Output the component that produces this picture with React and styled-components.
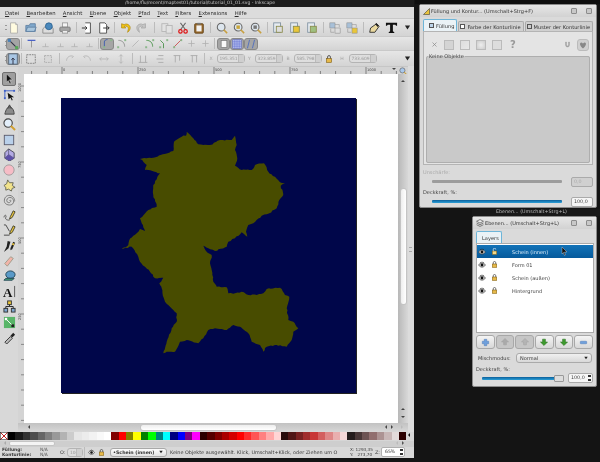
import React from "react";
import styled, { createGlobalStyle } from "styled-components";

const Global = createGlobalStyle`
  html, body { margin: 0; padding: 0; background: #141414; }
  body { font-family: "DejaVu Sans", sans-serif; font-size: 5.2px; color: #3a3a3a; }
  * { box-sizing: border-box; }
`;

const Desktop = styled.div`
  position: relative;
  width: 600px;
  height: 462px;
  overflow: hidden;
  background: #141414;
  filter: blur(0.35px);
`;

const MainWindow = styled.div`
  position: absolute;
  left: 0;
  top: 0;
  width: 414px;
  height: 458px;
  display: flex;
  flex-direction: column;
  background: #d6d6d6;
  border-bottom-right-radius: 3px;
`;

const TitleBar = styled.div`
  height: 7px;
  flex: none;
  background: #1c1c1c;
  color: #c4c4c4;
  font-size: 4.55px;
  line-height: 6px;
  text-align: center;
  padding-right: 14px;
  white-space: nowrap;
`;

const MenuBar = styled.div`
  height: 11px;
  flex: none;
  display: flex;
  align-items: center;
  gap: 7.3px;
  padding-left: 5px;
  background: #dcdcdc;
  font-size: 5.3px;
  color: #2c2c2c;
  u { text-underline-offset: 1px; }
`;

const Toolbar = styled.div`
  height: ${(p) => p.$h}px;
  flex: none;
  display: flex;
  align-items: center;
  padding-left: 8.5px;
  border-top: 1px solid #c9c9c9;
  background: linear-gradient(#e6e6e6, #d4d4d4);
  position: relative;
`;

const Grip = styled.span`
  width: 2px;
  height: 5px;
  margin-right: -1px;
  margin-left: -4px;
  border-top: 1px solid #999;
  border-bottom: 1px solid #999;
  flex: none;
`;

const Slot = styled.span`
  width: ${(p) => p.$w}px;
  height: ${(p) => (p.$w > 15 ? 14 : 12)}px;
  flex: none;
  display: inline-flex;
  align-items: center;
  justify-content: center;
  border-radius: 3px;
  ${(p) => p.$on && "background: #a5a5a5; border: 1px solid #888;"}
`;

const Sep = styled.span`
  width: 1px;
  height: 11px;
  flex: none;
  margin: 0 ${(p) => p.$m}px;
  background: #bcbcbc;
`;

const Fill = styled.span`
  flex: 1;
`;

const FieldLabel = styled.span`
  color: #a4a4a4;
  font-size: 4.6px;
  width: ${(p) => p.$w}px;
  text-align: center;
  flex: none;
`;

const SmallField = styled.span`
  width: ${(p) => p.$w}px;
  height: 9px;
  flex: none;
  border: 1px solid #b4b4b4;
  border-radius: 3px;
  font-size: 4.4px;
  line-height: 7px;
  padding-left: 2px;
  color: #9a9a9a;
  background: #dedede;
  position: relative;
  &::after {
    content: "";
    position: absolute;
    right: 0;
    top: 0;
    bottom: 0;
    width: 5px;
    border-left: 1px solid #bbb;
    background: #cfcfcf;
  }
`;

const Workspace = styled.div`
  flex: 1;
  min-height: 0;
  display: grid;
  grid-template-columns: 18px 6px 1fr 10px 6px;
  grid-template-rows: 8px 1fr 9px;
  background: #d6d6d6;
`;

const Toolbox = styled.div`
  grid-row: 1 / 4;
  display: flex;
  flex-direction: column;
  align-items: center;
  padding-top: 5px;
  border-top: 1px solid #c6c6c6;
  background: #d8d8d8;
  gap: 1.2px;
`;

const ToolSlot = styled.span`
  width: 14px;
  height: 14px;
  display: flex;
  align-items: center;
  justify-content: center;
  border-radius: 2px;
  ${(p) => p.$on && "background: #9e9e9e; border: 1px solid #707070;"}
`;

const HRuler = styled.div`
  grid-column: 2 / 5;
  background: #d4d4d4;
  border-top: 1px solid #c6c6c6;
  position: relative;
  svg { display: block; }
`;

const CornerZoom = styled.span`
  position: absolute;
  left: 381px;
  top: 0;
`;

const VRuler = styled.div`
  background: #d4d4d4;
  svg { display: block; }
`;

const Canvas = styled.div`
  background: #fff;
  padding: 24px 0 0 37px;
  overflow: hidden;
`;

const Art = styled.svg`
  display: block;
  width: 295px;
  height: 295px;
  box-shadow: 1px 1px 0 #222;
`;

const VScroll = styled.div`
  background: linear-gradient(90deg, #b8b8b8, #d8d8d8);
  position: relative;
`;

const VThumb = styled.div`
  position: absolute;
  left: 2px;
  top: 114px;
  width: 7px;
  height: 117px;
  background: linear-gradient(90deg, #eee, #fff);
  border: 1px solid #c4c4c4;
  border-radius: 3px;
`;

const Pane = styled.div`
  grid-row: 1 / 4;
  grid-column: 5;
  background: #dcdcdc;
  position: relative;
  &::after {
    content: "";
    position: absolute;
    left: 1px;
    top: 181px;
    width: 3px;
    height: 3px;
    border-top: 1px solid #aaa;
    border-bottom: 1px solid #aaa;
  }
`;

const Arrow = styled.span`
  position: absolute;
  left: ${(p) => p.$x}px;
  top: ${(p) => p.$y}px;
  width: 0;
  height: 0;
  border: 2.5px solid transparent;
  ${(p) => `border-${p.$side}-color: ${p.$c || "#444"};`}
`;

const HScroll = styled.div`
  grid-column: 2 / 5;
  background: linear-gradient(#c2c2c2, #d8d8d8);
  position: relative;
`;

const HThumb = styled.div`
  position: absolute;
  left: 122px;
  top: 1px;
  width: 137px;
  height: 7px;
  background: linear-gradient(#eee, #fff);
  border: 1px solid #c4c4c4;
  border-radius: 3px;
`;

const Palette = styled.div`
  height: 9px;
  flex: none;
  display: flex;
  padding-right: 8px;
  position: relative;
  background: #d6d6d6;
`;

const NoColor = styled.svg`
  width: 8px;
  height: 8px;
  flex: none;
  background: #fff;
  display: block;
`;

const Swatch = styled.span`
  flex: 1;
  height: 8px;
  background: ${(p) => p.$c};
`;

const PaletteBar = styled.div`
  height: 6px;
  flex: none;
  padding-left: 9px;
  position: relative;
  background: #cecece;
`;

const PaletteThumb = styled.div`
  width: 46px;
  height: 5px;
  background: #f4f4f4;
  border: 1px solid #c4c4c4;
  border-radius: 2px;
`;

const StatusBar = styled.div`
  height: 11px;
  flex: none;
  display: flex;
  align-items: center;
  font-size: 4.9px;
  white-space: nowrap;
  background: #d8d8d8;
  padding-bottom: 1px;
`;

const StyleLabels = styled.div`
  width: 40px;
  flex: none;
  line-height: 5px;
  padding-left: 2px;
  font-weight: bold;
  font-size: 4.4px;
`;

const StyleValues = styled.div`
  width: 20px;
  flex: none;
  line-height: 5px;
  color: #555;
  font-size: 4.4px;
`;

const OpacityLabel = styled.span`
  flex: none;
  width: 7px;
`;

const Combo = styled.span`
  width: 57px;
  height: 9px;
  flex: none;
  margin: 0 3px 0 4px;
  display: flex;
  align-items: center;
  justify-content: space-between;
  padding: 0 2px;
  background: linear-gradient(#fbfbfb, #e2e2e2);
  border: 1px solid #a8a8a8;
  border-radius: 3px;
  font-size: 4.7px;
  font-weight: bold;
  color: #333;
`;

const Message = styled.span`
  width: 178px;
  flex: none;
  overflow: hidden;
`;

const Coords = styled.div`
  flex: none;
  width: 25px;
  margin-left: 2px;
  font-size: 4.2px;
  line-height: 5px;
  white-space: pre;
`;

const ZoomLabel = styled.span`
  flex: none;
  width: 6px;
`;

const ZoomBox = styled.span`
  width: 24px;
  height: 10px;
  flex: none;
  background: #fff;
  border: 1px solid #b0b0b0;
  border-radius: 2px;
  font-size: 4.6px;
  line-height: 8px;
  padding-left: 3px;
  position: relative;
`;

const SpinMark = styled.span`
  position: absolute;
  right: 1px;
  top: 1px;
  width: 3px;
  height: 6px;
  border-top: 2px solid #333;
  border-bottom: 2px solid #333;
`;

const ToolWindow = styled.div`
  position: absolute;
  left: ${(p) => p.$x}px;
  top: ${(p) => p.$y}px;
  width: ${(p) => p.$w}px;
  height: ${(p) => p.$h}px;
  display: flex;
  flex-direction: column;
  background: #dadada;
  border: 1px solid #8a8a8a;
  border-radius: 2px;
  padding: 0 3px;
`;

const DialogHead = styled.div`
  height: 12px;
  flex: none;
  display: flex;
  align-items: center;
  gap: 1px;
  margin: 0 -3px;
  padding: 0 4px 0 3px;
  background: linear-gradient(#e6e6e6, #d2d2d2);
  font-size: 5px;
  color: #333;
  white-space: nowrap;
`;

const HeadBtn = styled.span`
  width: 6px;
  height: 6px;
  margin-left: 8px;
  flex: none;
  border: 1px solid #8c8c8c;
  border-radius: 1px;
  background: #c8c8c8;
`;

const Tabs = styled.div`
  display: flex;
  align-items: flex-end;
  margin-top: 2px;
  height: 12px;
  flex: none;
  gap: 1px;
`;

const Tab = styled.span`
  height: ${(p) => (p.$on ? 12 : 10)}px;
  padding: 0 2px 0 ${(p) => (p.$on ? 5 : 1)}px;
  display: flex;
  align-items: center;
  gap: 2px;
  font-size: 5.1px;
  white-space: nowrap;
  color: #333;
  background: ${(p) => (p.$on ? "#eaf2f6" : "#d0d0d0")};
  border: 1px solid ${(p) => (p.$on ? "#6db5d8" : "#aaa")};
  border-bottom: none;
  border-radius: 2px 2px 0 0;
`;

const TabIcon = styled.span`
  width: 5px;
  height: 5px;
  flex: none;
  border: 1px solid #555;
  background: ${(p) => p.$c || "#fff"};
`;

const FillPanel = styled.div`
  height: 134px;
  flex: none;
  display: flex;
  flex-direction: column;
  padding: 5px 2px 1px;
  background: #e4e4e4;
  border: 1px solid #b4b4b4;
`;

const PaintRow = styled.div`
  display: flex;
  align-items: center;
  height: 15px;
  flex: none;
  padding: 0 1px 0 5px;
  gap: 6px;
`;

const PaintBtn = styled.span`
  width: 10px;
  height: 10px;
  flex: none;
  border: 1px solid #bbb;
  background: ${(p) => p.$bg || "#d4d4d4"};
`;

const Unknown = styled.span`
  font-weight: bold;
  font-size: 10px;
  color: #999;
  line-height: 10px;
  width: 10px;
  text-align: center;
`;

const RuleBtn = styled.span`
  width: 12px;
  height: 12px;
  flex: none;
  display: flex;
  align-items: center;
  justify-content: center;
  background: #d0d0d0;
  border: 1px solid #bbb;
  border-radius: 3px;
`;

const EmptyFrame = styled.fieldset`
  flex: 1;
  margin: 2px 0 0;
  padding: 0;
  background: #c9c9c9;
  border: 1px solid #aeaeae;
  border-radius: 2px;
  legend {
    margin-left: 1px;
    padding: 0 1px;
    font-size: 5px;
    line-height: 4px;
    color: #444;
  }
`;

const CapLabel = styled.div`
  font-size: 5px;
  height: 8px;
  flex: none;
  line-height: 8px;
  margin-top: ${(p) => p.$mt || 0}px;
  color: ${(p) => p.$c || "#444"};
`;

const SliderRow = styled.div`
  display: flex;
  align-items: center;
  flex: none;
  padding-left: ${(p) => p.$pl}px;
  gap: ${(p) => p.$gap}px;
  height: ${(p) => p.$h}px;
`;

const Track = styled.span`
  flex: 1;
  height: 3px;
  border-radius: 1px;
  position: relative;
  background: ${(p) => (p.$on ? "linear-gradient(#0b5e9a, #2ba0d8)" : "#9c9c9c")};
`;

const Knob = styled.span`
  position: absolute;
  right: -3px;
  top: -2px;
  width: 10px;
  height: 7px;
  background: #ddd;
  border: 1px solid #999;
  border-radius: 1px;
`;

const NumBox = styled.span`
  width: ${(p) => p.$w}px;
  height: 10px;
  flex: none;
  font-size: 4.8px;
  line-height: 8px;
  padding-left: 2px;
  border: 1px solid #aaa;
  border-radius: 2px;
  background: ${(p) => (p.$dim ? "#d0d0d0" : "#f6f6f6")};
  color: ${(p) => (p.$dim ? "#aaa" : "#444")};
  position: relative;
`;

const LayerFrame = styled.div`
  height: 90px;
  flex: none;
  background: #fff;
  border: 1px solid #aaa;
  padding-top: 1px;
  margin-right: -1px;
`;

const LayerRow = styled.div`
  height: 13px;
  display: grid;
  grid-template-columns: 12px 13px 1fr;
  align-items: center;
  padding-left: 1px;
  column-gap: 1px;
  font-size: 5px;
  color: ${(p) => (p.$on ? "#dfeefa" : "#444")};
  background: ${(p) => (p.$on ? "linear-gradient(#1273b8, #065a9c)" : "#fff")};
  position: relative;
  span { padding-left: 7px; }
`;

const Pointer = styled.svg`
  position: absolute;
  left: 84px;
  top: 2px;
  width: 8px;
  height: 9px;
`;

const LayerButtons = styled.div`
  display: flex;
  gap: 1px;
  margin-top: 2px;
  height: 14px;
  flex: none;
`;

const LayerBtn = styled.span`
  flex: 1;
  display: flex;
  align-items: center;
  justify-content: center;
  border: 1px solid #a8a8a8;
  border-radius: 3px;
  background: ${(p) => (p.$dim ? "#c6c6c6" : "linear-gradient(#f4f4f4, #d8d8d8)")};
`;

const BlendRow = styled.div`
  display: flex;
  align-items: center;
  justify-content: space-between;
  margin-top: 4px;
  height: 10px;
  flex: none;
  font-size: 5px;
  padding-left: 2px;
`;

const BlendCombo = styled.span`
  width: 76px;
  height: 10px;
  margin-right: 1px;
  padding: 0 2px 0 3px;
  display: flex;
  align-items: center;
  justify-content: space-between;
  border: 1px solid #aaa;
  border-radius: 3px;
  background: linear-gradient(#f0f0f0, #d8d8d8);
`;

const FloatTitle = styled.div`
  position: absolute;
  left: 472px;
  top: 209px;
  width: 128px;
  height: 7px;
  background: #181818;
  color: #b8b8b8;
  font-size: 4.8px;
  line-height: 5px;
  padding-left: 24px;
  white-space: nowrap;
`;

const TopBlack = styled.div`
  position: absolute;
  left: 415px;
  top: 0;
  width: 185px;
  height: 4px;
  background: #0e0e0e;
`;

const I = ({ s = 12, children, vb = "0 0 14 14" }) => (
  <svg width={s} height={s} viewBox={vb} style={{ display: "block" }}>
    {children}
  </svg>
);

const Dim = ({ d, s, f = "#c6c6c6", st = "#aaa" }) => (
  <I s={s}>
    <path d={d} fill={f} stroke={st} strokeWidth="1" strokeLinejoin="round" />
  </I>
);

const New = () => (<I><path d="M3 1h6l2 2v10H3z" fill="#fffbe0" stroke="#aaa" /><path d="M9 1v2h2" fill="#eee" stroke="#aaa" /></I>);
const Open = () => (<I><path d="M1 4h4l1-2h6v9H1z" fill="#7fa8cc" stroke="#5f80a2" /><path d="M1 11l2-5h10l-2 5z" fill="#a8c6de" stroke="#5f80a2" /></I>);
const Save = () => (<I><path d="M1 13V8l2-2h9l1 2v5z" fill="#ddd" stroke="#888" /><circle cx="8" cy="5" r="4" fill="#4a88bc" stroke="#2c6492" /></I>);
const Print = () => (<I><rect x="4" y="1" width="6" height="5" fill="#f4f4f4" stroke="#999" /><rect x="1" y="6" width="12" height="5" rx="1" fill="#a4a4a4" stroke="#777" /><rect x="4" y="10" width="6" height="3" fill="#eee" stroke="#999" /></I>);
const Import = () => (<I><path d="M5 1h6v12H5" fill="#fff" stroke="#444" /><path d="M1 7h6M5 5l2 2-2 2" fill="none" stroke="#333" strokeWidth="1.1" /></I>);
const Export = () => (<I><path d="M2 1h6l2 2v10H2z" fill="#fff" stroke="#444" /><path d="M6 7h7M11 5l2 2-2 2" fill="none" stroke="#333" strokeWidth="1.1" /></I>);
const Undo = () => (<I><path d="M3 2v5h5l-2-2c3-1 5 1 5 3l-1 4c3-2 4-6 2-8-2-2-4-2-6-1z" fill="#f0c419" stroke="#a67c00" strokeWidth=".7" /></I>);
const Redo = () => <Dim d="M11 2v5H6l2-2C5 4 3 6 3 8l1 4C1 10 0 6 2 4c2-2 4-2 6-1z" />;
const Copy = () => (<I><rect x="1" y="2" width="7" height="9" fill="#e2e2e2" stroke="#b4b4b4" /><rect x="6" y="4" width="7" height="9" fill="#e2e2e2" stroke="#b4b4b4" /></I>);
const Cut = () => (<I><path d="M4 1l6 8M10 1L4 9" stroke="#666" strokeWidth="1.2" /><circle cx="4" cy="11" r="2" fill="none" stroke="#d11" strokeWidth="1.4" /><circle cx="10" cy="11" r="2" fill="none" stroke="#d11" strokeWidth="1.4" /></I>);
const Paste = () => (<I><rect x="2" y="2" width="10" height="11" rx="1" fill="#9a6b2d" stroke="#5f3f15" /><rect x="4" y="4" width="6" height="7" fill="#f2f2f2" /><rect x="5" y="1" width="4" height="2" fill="#777" /></I>);
const Zoom = ({ fill = "#dde6ee", mark, s }) => (<I s={s}><circle cx="6" cy="6" r="4.5" fill={fill} stroke="#666" strokeWidth="1.2" /><path d="M9 9l4 4" stroke="#c8a040" strokeWidth="1.8" />{mark && <rect x="4" y="4" width="4" height="4" fill={mark} />}</I>);
const Doc = ({ c = "#ddd" }) => (<I><rect x="2" y="1" width="8" height="11" fill="#e6ecf2" stroke="#7d8f9f" /><rect x="5" y="5" width="7" height="7" fill={c} stroke="#8a8a4a" /></I>);
const Ungroup = ({ c = "#a8c0d8", y = "#e9c63a" }) => (<I><rect x="1" y="1" width="6" height="6" fill={c} stroke="#888" strokeWidth=".6" /><rect x="7" y="7" width="6" height="6" fill={y} stroke="#888" strokeWidth=".6" /><path d="M7 3h5v3M2 8v4h4" fill="none" stroke="#888" strokeWidth=".6" /></I>);
const Pen = () => (<I><path d="M2 12l1-5 7-5 3 3-5 7z" fill="#ead9a0" stroke="#222" /><path d="M9 2l3 3" stroke="#222" strokeWidth="2" /></I>);
const Txt = ({ s = 13 }) => (<I s={s}><path d="M1 2h12v3h-1l-1-1H8.500v7l1.500 1v1H4v-1l1.500-1V4H3L2 5H1z" fill="#111" /></I>);
const Caret = ({ s = 9 }) => (<I s={s}><path d="M3 4h8l-4 6z" fill="#222" /></I>);
const SnapNode = () => (<I><path d="M3 3l8 8" stroke="#334" strokeWidth="1.2" /><rect x="1" y="1" width="3.500" height="3.500" fill="#4a82b8" /><rect x="9.500" y="9.500" width="3.500" height="3.500" fill="#5a5" /></I>);
const Faint = ({ d }) => (<I s={11}><path d={d} fill="none" stroke="#b0b0b0" strokeWidth="1" /></I>);
const NodeC = ({ c = "#888", d = "M3 11L11 3" }) => (<I s={11}><path d={d} fill="none" stroke={c} strokeWidth="1" /><rect x="1.500" y="10.500" width="2.500" height="2.500" fill="#8cb88c" /><rect x="10.500" y="1.500" width="2.500" height="2.500" fill="#8cb88c" /></I>);
const Blue = () => (<I s={11}><path d="M7 3v9" stroke="#888" strokeWidth="1" /><path d="M2 3h10" stroke="#4a62c8" strokeWidth="1.600" /></I>);
const Page = () => (<I s={10}><rect x="3" y="2" width="8" height="10" fill="#f8f8f8" stroke="#777" /></I>);
const Grid = () => (<I s={10}><path d="M1 1h12v12H1zM4 1v12M7 1v12M10 1v12M1 4h12M1 7h12M1 10h12" fill="#ccd4f4" stroke="#4050c8" strokeWidth=".7" /></I>);
const Guide = () => (<I s={10}><path d="M5 1L2 13M12 1L9 13" stroke="#4a6ac0" strokeWidth="1.200" /></I>);
const Lock = ({ s = 7 }) => (<I s={s}><rect x="2.500" y="6" width="9" height="7" fill="#e6b94a" stroke="#7a5a10" /><path d="M4.500 6V3.500a2.500 2.500 0 0 1 5 0V6" fill="none" stroke="#333" strokeWidth="1.3" /></I>);
const OpenLock = () => (<I s={7}><rect x="2.500" y="6" width="9" height="7" fill="#f3d98a" stroke="#7a5a10" /><path d="M4.500 6V3a2.500 2.500 0 0 1 5 0" fill="none" stroke="#fff" strokeWidth="1.3" /></I>);
const Eye = ({ s = 9 }) => (<I s={s}><path d="M1 7c3-5 9-5 12 0-3 5-9 5-12 0z" fill="#ddd" stroke="#222" /><circle cx="7" cy="7" r="2.500" fill="#111" /><path d="M4 2l1 2M7 1v2M10 2L9 4" stroke="#222" /></I>);

const tools = [
  <I s={12}><path d="M4 1l7 7H7.500l2 4-1.500.8-2-4L4 11z" fill="#111" stroke="#eee" strokeWidth=".5" /></I>,
  <I s={13}><path d="M2 3h10" stroke="#3c5ec8" /><path d="M2 3v8" stroke="#3c5ec8" /><rect x="1" y="2" width="2" height="2" fill="#3c5ec8" /><rect x="11" y="2" width="2" height="2" fill="#3c5ec8" /><rect x="1" y="10" width="2" height="2" fill="#3c5ec8" /><path d="M5 5l7 5H9l1.500 3-1 .5-1.500-3L6 12z" fill="#111" /></I>,
  <I s={13}><path d="M2 12c1-5 3-8 5-8s5 3 5 8z" fill="#8a8a8a" stroke="#444" /><path d="M5 6l2-4 2 4" fill="#666" stroke="#444" /></I>,
  <I s={13}><circle cx="5.500" cy="5.500" r="4.500" fill="#e2eefa" stroke="#444" strokeWidth="1.2" /><path d="M8.500 8.500l4.500 4.500" stroke="#d2a030" strokeWidth="2.200" /></I>,
  <I s={12}><rect x="1.500" y="1.500" width="11" height="11" fill="#b9d0ea" stroke="#556" /></I>,
  <I s={13}><path d="M2 5l4-4 6 4v6l-5 3-5-3z" fill="#b3aae4" stroke="#445" /><path d="M6 1v6l6 4M6 7l-4 4" fill="none" stroke="#445" strokeWidth=".6" /><path d="M6 7l6 4-5 3-5-3z" fill="#5d50a8" /></I>,
  <I s={12}><circle cx="7" cy="7" r="6" fill="#f6bcc6" stroke="#999" /></I>,
  <I s={13}><path d="M5 1l2 3 4 0-1 3 3 2-3 1-1 3-3-2-3 1 0-3-2-2 3-2z" fill="#f2e38c" stroke="#665" /></I>,
  <I s={13}><path d="M7 7c1-1 2 0 1 1.500s-4 1-4-1.500 3-4 5-3 3.500 4 1.500 6.500S2 12 1.500 8 4 1 7.500 1.500 13 6 12.500 8" fill="none" stroke="#777" strokeWidth="1" /></I>,
  <I s={13}><path d="M8 8l3-6 2 1-3 6-3 2z" fill="#e8c33c" stroke="#443" /><path d="M1 9c1-4 3-2 2 0s1 3 4 3" fill="none" stroke="#555" /></I>,
  <I s={13}><path d="M8 8l3-6 2 1-3 6-3 2z" fill="#e8c33c" stroke="#443" /><path d="M1 1h2l4 7M1 12h6" fill="none" stroke="#444" /></I>,
  <I s={13}><path d="M1 13l3-6 1-6 3 1-2 7zM8 9l3-7 2 1-3 7-2 1z" fill="#222" /><path d="M10 4l2 1" stroke="#e8c33c" strokeWidth="2" /></I>,
  <I s={12}><path d="M2 10l7-8 3 2-7 9z" fill="#f2b4a8" stroke="#998" /></I>,
  <I s={13}><ellipse cx="8" cy="5" rx="5" ry="4" fill="#5a9ac8" stroke="#245" /><path d="M1 11h9l2-2H3z" fill="#4aa878" stroke="#245" /></I>,
  <I s={13}><text x="0" y="12.500" fontSize="14" fontWeight="bold" fontFamily="Liberation Serif" fill="#111">A</text><path d="M12.500 1v12" stroke="#333" strokeWidth=".8" /></I>,
  <I s={13}><rect x="5" y="1" width="4" height="4" fill="#e9c63a" stroke="#333" /><rect x="1" y="9" width="4" height="4" fill="#7da6d0" stroke="#333" /><rect x="9" y="9" width="4" height="4" fill="#7da6d0" stroke="#333" /><path d="M7 5v2H3v2M7 7h4v2" fill="none" stroke="#222" /></I>,
  <I s={13}><rect x="1" y="1" width="12" height="12" fill="#58b568" /><path d="M3 3l7 7" stroke="#fff" strokeWidth="1" /><rect x="2" y="2" width="2.500" height="2.500" fill="#fff" /><rect x="9" y="9" width="3" height="3" fill="#222" /></I>,
  <I s={13}><path d="M2 12l6-6 2 2-6 6z" fill="#bbb" stroke="#333" /><path d="M8 5l3-3 2 2-3 3z" fill="#222" /></I>,
];

const ticksH = () => {
  const out = [];
  for (let i = -3; i < 24; i++) {
    const x = 44 + i * 15.2;
    const major = i % 5 === 0;
    out.push(<path key={i} d={`M${x} ${major ? 0 : 4}V7`} stroke="#444" strokeWidth=".6" />);
  }
  ["0", "250", "500", "750", "1000"].forEach((t, i) => {
    out.push(<text key={t} x={45 + i * 76} y="3.600" fontSize="3.600" fill="#444">{t}</text>);
  });
  return out;
};

const ticksV = () => {
  const out = [];
  for (let i = 0; i < 25; i++) {
    const y = 12 + i * 15.2;
    out.push(<path key={i} d={`M3 ${y}H6`} stroke="#555" strokeWidth=".6" />);
  }
  [["1000", 18], ["750", 94], ["500", 170], ["250", 246]].forEach(([t, y]) => {
    out.push(<text key={t} transform={`translate(3 ${y}) rotate(-90)`} fontSize="3.600" fill="#444">{t}</text>);
  });
  return out;
};

// Kontur aus dem Screenshot abgegriffen, Fraktalrand kommt vom rough()
const outline = "200,20 215,35 235,58 270,60 300,45 335,45 345,32 350,60 345,75 352,100 345,122 365,135 395,135 405,120 432,115 445,140 465,155 480,172 495,175 482,182 490,210 478,225 470,250 440,268 425,272 400,295 385,300 378,320 382,335 365,322 345,340 325,350 320,365 285,378 265,370 250,362 258,378 275,390 270,415 275,435 280,470 290,485 320,487 325,505 345,505 365,500 385,510 410,510 430,505 440,492 480,488 495,510 508,515 500,550 505,585 520,590 535,610 520,620 515,645 500,665 470,660 440,665 430,680 420,660 395,650 385,625 360,605 340,600 320,615 285,610 265,615 250,640 235,655 200,645 180,650 165,680 140,680 130,685 140,650 155,610 170,590 170,565 150,545 135,530 125,490 118,475 130,458 105,460 90,440 75,425 60,410 55,395 35,365 5,372 25,360 28,345 50,325 60,312 75,318 65,295 60,280 85,255 110,245 100,210 100,180 120,145 85,135 75,135 80,120 60,102 100,98 160,78 162,50 185,35 198,32"
  .split(" ")
  .map((p) => p.split(",").map(Number))
  .map(([x, y]) => [x / 3 + 120, y / 3 + 125]);

const rough = (pts) => {
  let seed = 7;
  const rnd = () => {
    seed = (seed * 16807) % 2147483647;
    return seed / 2147483647 - 0.5;
  };
  const res = [];
  pts.forEach((a, i) => {
    const b = pts[(i + 1) % pts.length];
    const n = Math.max(1, Math.round(Math.hypot(b[0] - a[0], b[1] - a[1]) / 2.2));
    for (let k = 0; k < n; k++) {
      const t = k / n;
      const j = k === 0 ? 0 : 1.1;
      res.push(`${(a[0] + (b[0] - a[0]) * t + rnd() * j).toFixed(1)},${(a[1] + (b[1] - a[1]) * t + rnd() * j).toFixed(1)}`);
    }
  });
  return res.join(" ");
};

const palette = [
  "#000", "#1a1a1a", "#333", "#4d4d4d", "#666", "#808080", "#999", "#b3b3b3", "#ccc", "#e6e6e6", "#ececec", "#f2f2f2", "#f9f9f9", "#fff",
  "#800000", "#f00", "#808000", "#ff0", "#008000", "#0f0", "#008080", "#0ff", "#000080", "#00f", "#800080", "#f0f",
  "#2b0000", "#500", "#800000", "#a00", "#d40000", "#f00", "#ff2a2a", "#f55", "#ff8080", "#faa", "#ffd5d5",
  "#280b0b", "#501616", "#782121", "#a02c2c", "#c83737", "#d35f5f", "#de8787", "#e9afaf", "#f4d7d7",
  "#241c1c", "#483737", "#6c5353", "#916f6f", "#ac9393", "#c8b7b7", "#e3dbdb", "#2b0000",
];

const layers = ["Schein (innen)", "Form 01", "Schein (außen)", "Hintergrund"];

const Updown = ({ c, dir }) => (
  <I s={10}>
    <path d={dir === "up" ? "M7 2l5 5H9v4H5V7H2z" : "M7 12l5-5H9V3H5v4H2z"} fill={c} stroke={c === "#3e9a2e" ? "#27701c" : "#a0a0a0"} strokeWidth=".7" />
  </I>
);

export default function App() {
  return (
    <Desktop>
      <Global />
      <TopBlack />
      <MainWindow>
        <TitleBar>/home/flu/recent/maptest01/tutorial/tutorial_01_01.svg - Inkscape</TitleBar>
        <MenuBar>
          {["Datei", "Bearbeiten", "Ansicht", "Ebene", "Objekt", "Pfad", "Text", "Filters", "Extensions", "Hilfe"].map((m) => (
            <span key={m}><u>{m[0]}</u>{m.slice(1)}</span>
          ))}
        </MenuBar>

        <Toolbar $h={18}>
          <Grip />
          <Slot $w={17}><New /></Slot>
          <Slot $w={17}><Open /></Slot>
          <Slot $w={17}><Save /></Slot>
          <Slot $w={17}><Print /></Slot>
          <Sep $m={2} />
          <Slot $w={17}><Import /></Slot>
          <Slot $w={17}><Export /></Slot>
          <Sep $m={1.5} />
          <Slot $w={17}><Undo /></Slot>
          <Slot $w={17}><Redo /></Slot>
          <Sep $m={3.5} />
          <Slot $w={16}><Copy /></Slot>
          <Slot $w={16}><Cut /></Slot>
          <Slot $w={17}><Paste /></Slot>
          <Sep $m={2.5} />
          <Slot $w={17}><Zoom /></Slot>
          <Slot $w={17}><Zoom mark="#c9a63a" /></Slot>
          <Slot $w={17}><Zoom mark="#777" /></Slot>
          <Sep $m={2} />
          <Slot $w={17}><Doc /></Slot>
          <Slot $w={17}><Doc c="#e9c63a" /></Slot>
          <Slot $w={17}><Doc c="#9fc080" /></Slot>
          <Sep $m={2.5} />
          <Slot $w={17}><Ungroup y="#ddd" /></Slot>
          <Slot $w={17}><Ungroup /></Slot>
          <Sep $m={2} />
          <Slot $w={17}><Pen /></Slot>
          <Slot $w={17}><Txt /></Slot>
          <Slot $w={16}><Caret /></Slot>
        </Toolbar>

        <Toolbar $h={14}>
          <Grip />
          <Slot $w={14} $on><SnapNode /></Slot>
          <Sep $m={1.5} />
          <Slot $w={15}><Blue /></Slot>
          {[0, 1, 2, 3].map((i) => (
            <Slot $w={14.500} key={i}><Faint d="M3 11h8M7 7v4" /></Slot>
          ))}
          <Sep $m={1.25} />
          <Slot $w={14} $on><NodeC c="#2a4fb0" d="M3 11V5c0-2 2-3 4-3" /></Slot>
          <Slot $w={14}><NodeC d="M3 3c5 0 8 3 8 8" /></Slot>
          <Slot $w={14}><Faint d="M3 11L11 3" /></Slot>
          <Slot $w={14}><NodeC c="#3a8a3a" d="M3 3c5 0 8 3 8 8" /></Slot>
          <Slot $w={14}><NodeC c="#3a8a3a" d="M3 3l4 4v6" /></Slot>
          <Slot $w={14}><NodeC c="#c83a3a" d="M2 12L12 2" /></Slot>
          <Slot $w={14}><Faint d="M3 7h8M7 3v8" /></Slot>
          <Slot $w={14}><Faint d="M3 7h8M7 3v8" /></Slot>
          <Sep $m={2} />
          <Slot $w={13} $on><Page /></Slot>
          <Slot $w={14} $on><Grid /></Slot>
          <Slot $w={14} $on><Guide /></Slot>
        </Toolbar>

        <Toolbar $h={16}>
          <Grip />
          <Slot $w={14} $on><I><rect x="2" y="1" width="10" height="12" fill="#a9c6e4" stroke="#567" /><path d="M7 13V6M5 8l2-2 2 2" stroke="#223" fill="none" /></I></Slot>
          <Sep $m={1} />
          <Slot $w={17}><I><rect x="2" y="2" width="10" height="10" fill="#ddd" stroke="#777" strokeDasharray="2 1" /></I></Slot>
          <Slot $w={17}><I><rect x="3" y="3" width="8" height="8" fill="#d8d8d8" stroke="#aaa" strokeDasharray="2 1" /></I></Slot>
          <Sep $m={2} />
          {["M3 9c0-4 4-7 8-5l-2 2", "M11 9c0-4-4-7-8-5l2 2", "M2 7h10M4 5L2 7l2 2M10 5l2 2-2 2", "M7 2v10M5 4l2-2 2 2M5 10l2 2 2-2"].map((d) => (
            <Slot $w={17} key={d}><Dim d={d} f="none" st="#b4b4b4" /></Slot>
          ))}
          <Sep $m={2} />
          {["M4 3v8M10 3v8M2 11h10", "M3 7h8M5 3h6M5 11h6", "M3 3h8M5 3v8M10 3v6", "M3 3h8M5 3v8M10 3v8"].map((d) => (
            <Slot $w={17} key={d}><Dim d={d} f="none" st="#aaa" /></Slot>
          ))}
          <Sep $m={1} />
          <FieldLabel $w={11}>X</FieldLabel>
          <SmallField $w={28}>195.351</SmallField>
          <FieldLabel $w={10}>Y</FieldLabel>
          <SmallField $w={28}>323.859</SmallField>
          <FieldLabel $w={11}>B</FieldLabel>
          <SmallField $w={28}>585.798</SmallField>
          <Slot $w={14}><Lock s={8} /></Slot>
          <FieldLabel $w={13}>H</FieldLabel>
          <SmallField $w={28}>733.609</SmallField>
          <Fill />
          <Slot $w={14}><Caret /></Slot>
        </Toolbar>

        <Workspace>
          <Toolbox>
            {tools.map((t, i) => (
              <ToolSlot key={i} $on={i === 0}>{t}</ToolSlot>
            ))}
          </Toolbox>
          <HRuler>
            <svg width="380" height="7">{ticksH()}</svg>
            <Arrow $x={374} $y={1} $side="top" />
            <CornerZoom><Zoom s={8} fill="#a8c8ec" /></CornerZoom>
          </HRuler>
          <VRuler>
            <svg width="6" height="349">{ticksV()}</svg>
          </VRuler>
          <Canvas>
            <Art viewBox="61 98 295 295" xmlns="http://www.w3.org/2000/svg">
              <rect x="61" y="98" width="295" height="295" fill="#00064a" />
              <polygon points={rough(outline)} fill="#484c00" />
            </Art>
          </Canvas>
          <VScroll>
            <Arrow $x={2.500} $y={4} $side="bottom" />
            <VThumb />
            <Arrow $x={2.500} $y={332} $side="bottom" />
            <Arrow $x={2.500} $y={342} $side="top" />
          </VScroll>
          <Pane />
          <HScroll>
            <Arrow $x={8} $y={2} $side="right" />
            <HThumb />
            <Arrow $x={365} $y={2} $side="right" />
            <Arrow $x={373} $y={2} $side="left" />
            <Arrow $x={383} $y={2} $side="left" $c="#bbb" />
          </HScroll>
        </Workspace>

        <Palette>
          <NoColor viewBox="0 0 8 8"><path d="M0 0l8 8M8 0L0 8" stroke="#c02020" strokeWidth="1" /><rect x=".5" y=".5" width="7" height="7" fill="none" stroke="#333" strokeWidth=".6" /></NoColor>
          {palette.map((c, i) => (
            <Swatch key={i} $c={c} />
          ))}
          <Arrow $x={406} $y={1} $side="right" $c="#111" />
        </Palette>
        <PaletteBar>
          <PaletteThumb />
          <Arrow $x={2} $y={0} $side="right" $c="#aaa" />
          <Arrow $x={394} $y={0} $side="right" $c="#bbb" />
          <Arrow $x={402} $y={0} $side="left" $c="#555" />
        </PaletteBar>
        <StatusBar>
          <StyleLabels>Füllung:<br />Konturlinie:</StyleLabels>
          <StyleValues>N/A<br />N/A</StyleValues>
          <OpacityLabel>O:</OpacityLabel>
          <SmallField $w={16}>100</SmallField>
          <Sep $m={1} />
          <Slot $w={10}><Eye s={7} /></Slot>
          <Slot $w={10}><Lock /></Slot>
          <Combo>•Schein (innen)<Caret s={6} /></Combo>
          <Message>Keine Objekte ausgewählt. Klick, Umschalt+Klick, oder Ziehen um O</Message>
          <Coords>{"X: 1293,35\nY:   273,70"}</Coords>
          <ZoomLabel>Z:</ZoomLabel>
          <ZoomBox>65%<SpinMark /></ZoomBox>
        </StatusBar>
      </MainWindow>

      <ToolWindow $x={419} $y={4} $w={178} $h={204}>
        <DialogHead>
          <I s={7}><path d="M1 13L13 1v12z" fill="#e8c33c" stroke="#222" /></I>
          Füllung und Kontur... (Umschalt+Strg+F)
          <Fill />
          <HeadBtn />
          <HeadBtn />
        </DialogHead>
        <Tabs>
          <Tab $on><TabIcon $c="#bcd4ea" />Füllung</Tab>
          <Tab><TabIcon />Farbe der Konturlinie</Tab>
          <Tab><TabIcon $c="#ccc" />Muster der Konturlinie</Tab>
        </Tabs>
        <FillPanel>
          <PaintRow>
            <I s={7}><path d="M3 3l8 8M11 3l-8 8" stroke="#888" strokeWidth="1.4" /></I>
            <PaintBtn />
            <PaintBtn $bg="linear-gradient(135deg,#ddd,#e8e8e8)" />
            <PaintBtn $bg="radial-gradient(#eee,#ccc)" />
            <PaintBtn $bg="#ddd" />
            <Unknown>?</Unknown>
            <Fill />
            <I s={7}><path d="M3 2v6a4 4 0 0 0 8 0V2H9v6a2 2 0 0 1-4 0V2z" fill="#aaa" stroke="#777" strokeWidth=".5" /></I>
            <RuleBtn>
              <I s={8}><path d="M7 13C1 8 1 4 3 3s4 1 4 2c0-1 2-3 4-2s2 5-4 10z" fill="#888" /></I>
            </RuleBtn>
          </PaintRow>
          <EmptyFrame><legend>Keine Objekte</legend></EmptyFrame>
        </FillPanel>
        <CapLabel $mt={3} $c="#a8a8a8">Unschärfe:</CapLabel>
        <SliderRow $pl={9} $gap={9} $h={11}>
          <Track />
          <NumBox $w={22} $dim>0,0</NumBox>
        </SliderRow>
        <CapLabel $mt={1}>Deckkraft, %:</CapLabel>
        <SliderRow $pl={9} $gap={9} $h={11}>
          <Track $on />
          <NumBox $w={22}>100,0</NumBox>
        </SliderRow>
      </ToolWindow>

      <FloatTitle>Ebenen... (Umschalt+Strg+L)</FloatTitle>
      <ToolWindow $x={472} $y={216} $w={125} $h={171}>
        <DialogHead>
          <I s={8}><path d="M1 4l6-3 6 3-6 3z" fill="#eee" stroke="#333" /><path d="M1 7l6 3 6-3M1 10l6 3 6-3" fill="none" stroke="#333" /></I>
          Ebenen... (Umschalt+Strg+L)
          <Fill />
          <HeadBtn />
          <HeadBtn />
        </DialogHead>
        <Tabs>
          <Tab $on>Layers</Tab>
        </Tabs>
        <LayerFrame>
          {layers.map((name, i) => (
            <LayerRow key={name} $on={i === 0}>
              <Eye s={8} />
              {i === 0 ? <OpenLock /> : <Lock />}
              <span>{name}</span>
              {i === 0 && (
                <Pointer viewBox="0 0 8 9"><path d="M1 0l5 5H3.500l1 3-1 .5-1-3L1 7z" fill="#111" stroke="#ddd" strokeWidth=".4" /></Pointer>
              )}
            </LayerRow>
          ))}
        </LayerFrame>
        <LayerButtons>
          <LayerBtn><I s={9}><path d="M5 2h4v3h3v4H9v3H5V9H2V5h3z" fill="#6fa0dc" stroke="#3c6cae" strokeWidth=".6" /></I></LayerBtn>
          <LayerBtn $dim><Updown c="#aaa" dir="up" /></LayerBtn>
          <LayerBtn $dim><Updown c="#b4b4b4" dir="up" /></LayerBtn>
          <LayerBtn><Updown c="#3e9a2e" dir="down" /></LayerBtn>
          <LayerBtn><Updown c="#3e9a2e" dir="down" /></LayerBtn>
          <LayerBtn><I s={9}><rect x="2" y="5" width="10" height="4" rx="1" fill="#6fa0dc" stroke="#3c6cae" strokeWidth=".6" /></I></LayerBtn>
        </LayerButtons>
        <BlendRow>
          Mischmodus:
          <BlendCombo>Normal<Caret s={6} /></BlendCombo>
        </BlendRow>
        <CapLabel $mt={2}>Deckkraft, %:</CapLabel>
        <SliderRow $pl={6} $gap={7} $h={10}>
          <Track $on><Knob /></Track>
          <NumBox $w={25}>100,0<SpinMark /></NumBox>
        </SliderRow>
      </ToolWindow>
    </Desktop>
  );
}
